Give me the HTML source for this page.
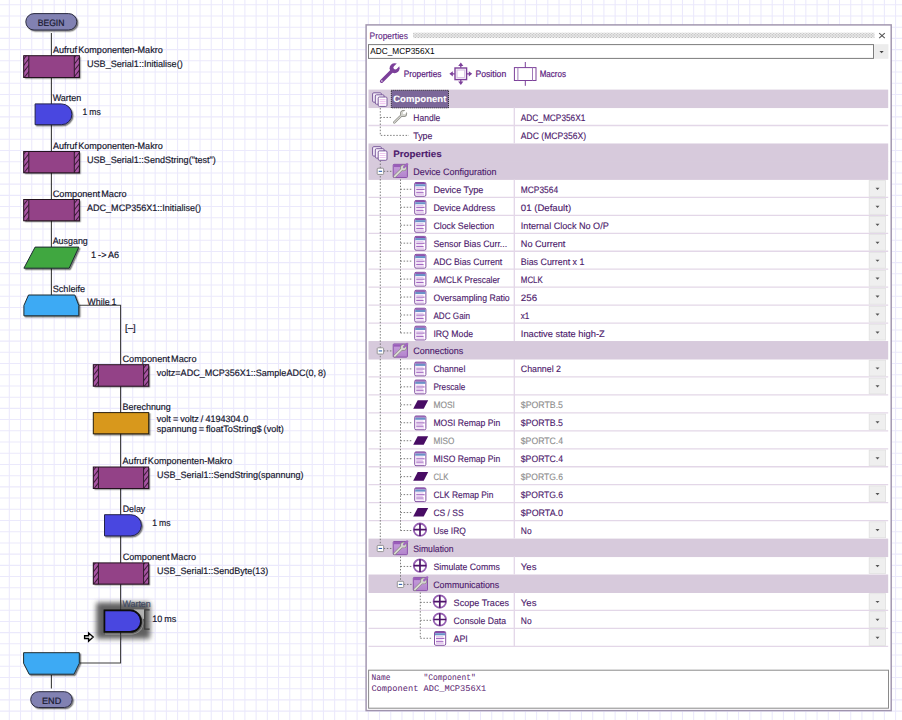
<!DOCTYPE html>
<html><head><meta charset="utf-8"><title>Flowcode</title>
<style>html,body{margin:0;padding:0;background:#fff}body{width:902px;height:720px;overflow:hidden;position:relative}svg{position:absolute;left:0;top:0;display:block}text{font-family:"Liberation Sans",sans-serif;white-space:pre;text-rendering:geometricPrecision}</style></head><body>
<svg width="902" height="720" viewBox="0 0 902 720" font-family='"Liberation Sans", sans-serif'>
<defs>
<filter id="sh" x="-20%" y="-20%" width="150%" height="160%"><feDropShadow dx="1.3" dy="1.3" stdDeviation="0.45" flood-color="#000" flood-opacity="0.5"/></filter>
<filter id="glow" x="-40%" y="-40%" width="180%" height="180%"><feGaussianBlur stdDeviation="2.7"/></filter>
<pattern id="hatch" width="3.9" height="3.9" patternUnits="userSpaceOnUse" patternTransform="rotate(-52)"><rect width="3.9" height="3.9" fill="#a755a2"/><rect width="3.9" height="0.95" fill="#3a1836"/></pattern>
<pattern id="grip" width="3" height="5.4" patternUnits="userSpaceOnUse" x="413" y="32.7"><rect width="3" height="5.4" fill="#f6f6f6"/><g fill="#a2a2a2"><rect x="0.2" y="0.2" width="1.15" height="1.1"/><rect x="1.7" y="1.55" width="1.15" height="1.1"/><rect x="0.2" y="2.9" width="1.15" height="1.1"/><rect x="1.7" y="4.2" width="1.15" height="1.1"/></g></pattern>
<linearGradient id="fold" x1="0" y1="0" x2="0" y2="1"><stop offset="0" stop-color="#c79fdc"/><stop offset="1" stop-color="#b283cc"/></linearGradient>
</defs>
<rect width="902" height="720" fill="#fff"/>
<g stroke="#ebe9fc" stroke-width="1.05">
<path d="M9.30 0V720M20.52 0V720M31.74 0V720M42.96 0V720M54.18 0V720M65.39 0V720M76.61 0V720M87.83 0V720M99.05 0V720M110.27 0V720M121.49 0V720M132.71 0V720M143.93 0V720M155.15 0V720M166.37 0V720M177.58 0V720M188.80 0V720M200.02 0V720M211.24 0V720M222.46 0V720M233.68 0V720M244.90 0V720M256.12 0V720M267.34 0V720M278.56 0V720M289.77 0V720M300.99 0V720M312.21 0V720M323.43 0V720M334.65 0V720M345.87 0V720M357.09 0V720M368.31 0V720M379.53 0V720M390.75 0V720M401.96 0V720M413.18 0V720M424.40 0V720M435.62 0V720M446.84 0V720M458.06 0V720M469.28 0V720M480.50 0V720M491.72 0V720M502.94 0V720M514.15 0V720M525.37 0V720M536.59 0V720M547.81 0V720M559.03 0V720M570.25 0V720M581.47 0V720M592.69 0V720M603.91 0V720M615.13 0V720M626.35 0V720M637.56 0V720M648.78 0V720M660.00 0V720M671.22 0V720M682.44 0V720M693.66 0V720M704.88 0V720M716.10 0V720M727.32 0V720M738.54 0V720M749.75 0V720M760.97 0V720M772.19 0V720M783.41 0V720M794.63 0V720M805.85 0V720M817.07 0V720M828.29 0V720M839.51 0V720M850.73 0V720M861.94 0V720M873.16 0V720M884.38 0V720M895.60 0V720M0 4.75H902M0 15.96H902M0 27.17H902M0 38.39H902M0 49.60H902M0 60.81H902M0 72.02H902M0 83.23H902M0 94.45H902M0 105.66H902M0 116.87H902M0 128.08H902M0 139.29H902M0 150.51H902M0 161.72H902M0 172.93H902M0 184.14H902M0 195.35H902M0 206.57H902M0 217.78H902M0 228.99H902M0 240.20H902M0 251.41H902M0 262.63H902M0 273.84H902M0 285.05H902M0 296.26H902M0 307.47H902M0 318.69H902M0 329.90H902M0 341.11H902M0 352.32H902M0 363.53H902M0 374.75H902M0 385.96H902M0 397.17H902M0 408.38H902M0 419.59H902M0 430.81H902M0 442.02H902M0 453.23H902M0 464.44H902M0 475.65H902M0 486.87H902M0 498.08H902M0 509.29H902M0 520.50H902M0 531.71H902M0 542.93H902M0 554.14H902M0 565.35H902M0 576.56H902M0 587.77H902M0 598.99H902M0 610.20H902M0 621.41H902M0 632.62H902M0 643.83H902M0 655.05H902M0 666.26H902M0 677.47H902M0 688.68H902M0 699.89H902M0 711.11H902" fill="none"/>
</g>
<g stroke="#3c3c3c" stroke-width="1.1" fill="none">
<path d="M51.4 33V296"/>
<path d="M79.3 305.2H120.6V663H79.8"/>
<path d="M51.4 675V688.6"/>
</g>
<g filter="url(#sh)"><rect x="25.80" y="13.60" width="51.00" height="16.40" rx="8.20" fill="#8181b2" stroke="#2c2c40" stroke-width="1.0"/></g>
<text x="37.70" y="25.80" font-size="9.2" fill="#16162e" stroke="#16162e" stroke-width="0.18" word-spacing="-0.5" textLength="26.70" lengthAdjust="spacingAndGlyphs" >BEGIN</text>
<g filter="url(#sh)"><rect x="23.70" y="55.70" width="55.70" height="21.80" fill="#934387"/></g>
<rect x="23.70" y="55.70" width="5.1" height="21.80" fill="url(#hatch)"/>
<rect x="74.30" y="55.70" width="5.1" height="21.80" fill="url(#hatch)"/>
<path d="M28.80 55.70V77.50M74.30 55.70V77.50" stroke="#2a1626" stroke-width="0.95" fill="none"/>
<rect x="23.70" y="55.70" width="55.70" height="21.80" fill="none" stroke="#24121f" stroke-width="1.0"/>
<text x="53.00" y="52.85" font-size="9.3" fill="#16162e" stroke="#16162e" stroke-width="0.18" word-spacing="-1.4" textLength="109.70" lengthAdjust="spacingAndGlyphs" >Aufruf Komponenten-Makro</text>
<text x="87.00" y="66.85" font-size="9.3" fill="#16162e" stroke="#16162e" stroke-width="0.18" word-spacing="-0.5" textLength="95.70" lengthAdjust="spacingAndGlyphs" >USB_Serial1::Initialise()</text>
<g filter="url(#sh)"><path d="M35.10 103.90H61.50A10.40 10.40 0 0 1 61.50 124.70H35.10Z" fill="#4a46e0" stroke="#22224a" stroke-width="1.0"/></g>
<text x="52.70" y="101.05" font-size="9.3" fill="#16162e" stroke="#16162e" stroke-width="0.18" word-spacing="-0.5" textLength="28.60" lengthAdjust="spacingAndGlyphs" >Warten</text>
<text x="82.50" y="114.85" font-size="9.3" fill="#16162e" stroke="#16162e" stroke-width="0.18" word-spacing="-0.5" textLength="18.20" lengthAdjust="spacingAndGlyphs" >1 ms</text>
<g filter="url(#sh)"><rect x="23.70" y="151.50" width="55.70" height="21.30" fill="#934387"/></g>
<rect x="23.70" y="151.50" width="5.1" height="21.30" fill="url(#hatch)"/>
<rect x="74.30" y="151.50" width="5.1" height="21.30" fill="url(#hatch)"/>
<path d="M28.80 151.50V172.80M74.30 151.50V172.80" stroke="#2a1626" stroke-width="0.95" fill="none"/>
<rect x="23.70" y="151.50" width="55.70" height="21.30" fill="none" stroke="#24121f" stroke-width="1.0"/>
<text x="53.00" y="148.65" font-size="9.3" fill="#16162e" stroke="#16162e" stroke-width="0.18" word-spacing="-1.4" textLength="109.70" lengthAdjust="spacingAndGlyphs" >Aufruf Komponenten-Makro</text>
<text x="87.00" y="162.65" font-size="9.3" fill="#16162e" stroke="#16162e" stroke-width="0.18" word-spacing="-0.5" textLength="128.70" lengthAdjust="spacingAndGlyphs" >USB_Serial1::SendString("test")</text>
<g filter="url(#sh)"><rect x="23.70" y="199.50" width="55.70" height="21.30" fill="#934387"/></g>
<rect x="23.70" y="199.50" width="5.1" height="21.30" fill="url(#hatch)"/>
<rect x="74.30" y="199.50" width="5.1" height="21.30" fill="url(#hatch)"/>
<path d="M28.80 199.50V220.80M74.30 199.50V220.80" stroke="#2a1626" stroke-width="0.95" fill="none"/>
<rect x="23.70" y="199.50" width="55.70" height="21.30" fill="none" stroke="#24121f" stroke-width="1.0"/>
<text x="52.70" y="196.65" font-size="9.3" fill="#16162e" stroke="#16162e" stroke-width="0.18" word-spacing="-1.4" textLength="74.00" lengthAdjust="spacingAndGlyphs" >Component Macro</text>
<text x="87.00" y="210.65" font-size="9.3" fill="#16162e" stroke="#16162e" stroke-width="0.18" word-spacing="-0.5" textLength="114.00" lengthAdjust="spacingAndGlyphs" >ADC_MCP356X1::Initialise()</text>
<g filter="url(#sh)"><polygon points="35.10,247.10 78.80,247.10 69.20,268.20 23.90,268.20" fill="#41a741" stroke="#1c2a30" stroke-width="1.0"/></g>
<text x="52.70" y="244.15" font-size="9.3" fill="#16162e" stroke="#16162e" stroke-width="0.18" word-spacing="-0.5" textLength="35.10" lengthAdjust="spacingAndGlyphs" >Ausgang</text>
<text x="91.00" y="258.05" font-size="9.3" fill="#16162e" stroke="#16162e" stroke-width="0.18" word-spacing="-0.5" textLength="28.20" lengthAdjust="spacingAndGlyphs" >1 -&gt; A6</text>
<g filter="url(#sh)"><polygon points="28.50,295.00 74.80,295.00 78.80,305.50 78.80,315.80 23.90,315.80 23.90,305.50" fill="#3eaaf4" stroke="#1c2a30" stroke-width="1.0"/></g>
<text x="52.70" y="292.05" font-size="9.3" fill="#16162e" stroke="#16162e" stroke-width="0.18" word-spacing="-0.5" textLength="32.50" lengthAdjust="spacingAndGlyphs" >Schleife</text>
<text x="87.30" y="305.05" font-size="9.3" fill="#16162e" stroke="#16162e" stroke-width="0.18" word-spacing="-0.5" textLength="29.30" lengthAdjust="spacingAndGlyphs" >While 1</text>
<text x="125.00" y="331.05" font-size="9.3" fill="#16162e" stroke="#16162e" stroke-width="0.18" word-spacing="-0.5" textLength="10.70" lengthAdjust="spacingAndGlyphs" >[–]</text>
<g filter="url(#sh)"><rect x="93.30" y="364.70" width="55.40" height="21.50" fill="#934387"/></g>
<rect x="93.30" y="364.70" width="5.1" height="21.50" fill="url(#hatch)"/>
<rect x="143.60" y="364.70" width="5.1" height="21.50" fill="url(#hatch)"/>
<path d="M98.40 364.70V386.20M143.60 364.70V386.20" stroke="#2a1626" stroke-width="0.95" fill="none"/>
<rect x="93.30" y="364.70" width="55.40" height="21.50" fill="none" stroke="#24121f" stroke-width="1.0"/>
<text x="122.50" y="361.85" font-size="9.3" fill="#16162e" stroke="#16162e" stroke-width="0.18" word-spacing="-1.4" textLength="74.00" lengthAdjust="spacingAndGlyphs" >Component Macro</text>
<text x="156.80" y="375.75" font-size="9.3" fill="#16162e" stroke="#16162e" stroke-width="0.18" word-spacing="-0.5" textLength="169.20" lengthAdjust="spacingAndGlyphs" >voltz=ADC_MCP356X1::SampleADC(0, 8)</text>
<g filter="url(#sh)"><rect x="93.3" y="412.6" width="55.4" height="21.2" fill="#d8981b" stroke="#2a2010" stroke-width="1.0"/></g>
<text x="122.50" y="409.75" font-size="9.3" fill="#16162e" stroke="#16162e" stroke-width="0.18" word-spacing="-0.5" textLength="48.30" lengthAdjust="spacingAndGlyphs" >Berechnung</text>
<text x="156.80" y="421.75" font-size="9.3" fill="#16162e" stroke="#16162e" stroke-width="0.18" word-spacing="-0.5" textLength="91.40" lengthAdjust="spacingAndGlyphs" >volt = voltz / 4194304.0</text>
<text x="156.80" y="432.35" font-size="9.3" fill="#16162e" stroke="#16162e" stroke-width="0.18" word-spacing="-0.5" textLength="127.00" lengthAdjust="spacingAndGlyphs" >spannung = floatToString$ (volt)</text>
<g filter="url(#sh)"><rect x="93.30" y="467.00" width="55.40" height="21.50" fill="#934387"/></g>
<rect x="93.30" y="467.00" width="5.1" height="21.50" fill="url(#hatch)"/>
<rect x="143.60" y="467.00" width="5.1" height="21.50" fill="url(#hatch)"/>
<path d="M98.40 467.00V488.50M143.60 467.00V488.50" stroke="#2a1626" stroke-width="0.95" fill="none"/>
<rect x="93.30" y="467.00" width="55.40" height="21.50" fill="none" stroke="#24121f" stroke-width="1.0"/>
<text x="122.60" y="464.15" font-size="9.3" fill="#16162e" stroke="#16162e" stroke-width="0.18" word-spacing="-1.4" textLength="109.70" lengthAdjust="spacingAndGlyphs" >Aufruf Komponenten-Makro</text>
<text x="157.00" y="478.05" font-size="9.3" fill="#16162e" stroke="#16162e" stroke-width="0.18" word-spacing="-0.5" textLength="146.40" lengthAdjust="spacingAndGlyphs" >USB_Serial1::SendString(spannung)</text>
<g filter="url(#sh)"><path d="M104.50 514.70H130.80A10.60 10.60 0 0 1 130.80 535.90H104.50Z" fill="#4a46e0" stroke="#22224a" stroke-width="1.0"/></g>
<text x="122.70" y="512.05" font-size="9.3" fill="#16162e" stroke="#16162e" stroke-width="0.18" word-spacing="-0.5" textLength="22.50" lengthAdjust="spacingAndGlyphs" >Delay</text>
<text x="152.30" y="525.75" font-size="9.3" fill="#16162e" stroke="#16162e" stroke-width="0.18" word-spacing="-0.5" textLength="18.30" lengthAdjust="spacingAndGlyphs" >1 ms</text>
<g filter="url(#sh)"><rect x="93.30" y="562.90" width="55.40" height="21.20" fill="#934387"/></g>
<rect x="93.30" y="562.90" width="5.1" height="21.20" fill="url(#hatch)"/>
<rect x="143.60" y="562.90" width="5.1" height="21.20" fill="url(#hatch)"/>
<path d="M98.40 562.90V584.10M143.60 562.90V584.10" stroke="#2a1626" stroke-width="0.95" fill="none"/>
<rect x="93.30" y="562.90" width="55.40" height="21.20" fill="none" stroke="#24121f" stroke-width="1.0"/>
<text x="122.70" y="559.95" font-size="9.3" fill="#16162e" stroke="#16162e" stroke-width="0.18" word-spacing="-1.4" textLength="73.30" lengthAdjust="spacingAndGlyphs" >Component Macro</text>
<text x="157.00" y="573.85" font-size="9.3" fill="#16162e" stroke="#16162e" stroke-width="0.18" word-spacing="-0.5" textLength="111.20" lengthAdjust="spacingAndGlyphs" >USB_Serial1::SendByte(13)</text>
<rect x="96.2" y="602.6" width="54.0" height="36.2" rx="2" fill="#606060" filter="url(#glow)"/>
<rect x="134" y="609.4" width="10.4" height="9.5" fill="#b2b2b2"/>
<path d="M105.2 611.2H131.8A11.6 11.6 0 0 1 131.8 634.4H105.2Z" fill="#c2c2c2"/>
<path d="M120.6 600V640" stroke="#3c3c3c" stroke-width="1.1"/>
<path d="M149.6 609.9H144.7V629H149.6" fill="none" stroke="#3c3c3c" stroke-width="1.25"/>
<g filter="url(#sh)"><path d="M104.45 610.45H130.20A10.75 10.75 0 0 1 130.20 631.95H104.45Z" fill="#4a46e0" stroke="#0a0a0a" stroke-width="1.7"/></g>
<text x="122.40" y="607.00" font-size="9.3" fill="#3e4862" stroke="#3e4862" stroke-width="0.15" textLength="28.40" lengthAdjust="spacingAndGlyphs" >Warten</text>
<text x="152.20" y="621.65" font-size="9.3" fill="#16162e" stroke="#16162e" stroke-width="0.18" word-spacing="-0.5" textLength="24.00" lengthAdjust="spacingAndGlyphs" >10 ms</text>
<path d="M84.6 635.7H88.6V633.0L93.2 637.1L88.6 641.2V638.5H84.6Z" fill="#fff" stroke="#000" stroke-width="1.35"/>
<g filter="url(#sh)"><polygon points="23.60,652.70 79.30,652.70 79.30,663.30 74.00,674.20 29.20,674.20 23.60,663.30" fill="#3eaaf4" stroke="#1c2a30" stroke-width="1.0"/></g>
<g filter="url(#sh)"><rect x="30.70" y="691.70" width="41.50" height="15.80" rx="7.90" fill="#8181b2" stroke="#2c2c40" stroke-width="1.0"/></g>
<text x="42.00" y="703.60" font-size="9.2" fill="#16162e" stroke="#16162e" stroke-width="0.18" word-spacing="-0.5" textLength="19.20" lengthAdjust="spacingAndGlyphs" >END</text>
<rect x="366.1" y="24.9" width="525.1" height="685.7" fill="#fff" stroke="#a094ae" stroke-width="1.45"/>
<text x="369.60" y="39.05" font-size="9.3" fill="#632a86" stroke="#632a86" stroke-width="0.13" textLength="38.30" lengthAdjust="spacingAndGlyphs" >Properties</text>
<rect x="413" y="32.7" width="461.5" height="5.4" fill="url(#grip)"/>
<path d="M879.2 33.2L884.8 38.2M884.8 33.2L879.2 38.2" stroke="#555" stroke-width="1.1"/>
<rect x="368.5" y="44.6" width="505" height="13.8" fill="#fff" stroke="#7c7c7c" stroke-width="1"/>
<rect x="874.2" y="44.2" width="14.2" height="14.6" fill="#ececec"/>
<path d="M879.5 50.9H883.7L881.6 53.3Z" fill="#444"/>
<text x="370.30" y="53.70" font-size="8.7" fill="#000" textLength="64.30" lengthAdjust="spacingAndGlyphs" >ADC_MCP356X1</text>
<g>
<path d="M381.6 81.2L392.6 70.2" stroke="#7c409a" stroke-width="3.4" stroke-linecap="round"/>
<circle cx="394.6" cy="68.3" r="5.0" fill="#7c409a"/>
<path d="M395.3 67.6L401.5 61.4" stroke="#fff" stroke-width="3.7"/>
<circle cx="395.3" cy="67.6" r="1.85" fill="#fff"/>
<circle cx="381.9" cy="80.9" r="0.75" fill="#fff"/>
</g>
<text x="403.70" y="77.00" font-size="9.3" fill="#5c2280" stroke="#5c2280" stroke-width="0.2" textLength="37.70" lengthAdjust="spacingAndGlyphs" >Properties</text>
<g stroke="#7c409a" fill="none">
<rect x="455.00" y="68.00" width="11.6" height="11.6" stroke-width="1.4"/>
<rect x="457.00" y="70.00" width="7.6" height="7.6" stroke="#d9c4e4" stroke-width="1.2"/>
<path d="M460.8 67.8V64.3M460.8 79.8V83.3M454.8 73.8H451.3M466.8 73.8H470.3" stroke-width="1.3"/>
</g>
<g fill="#7c409a">
<path d="M460.8 62.599999999999994L463.40000000000003 66.0H458.2Z"/>
<path d="M460.8 85.0L463.40000000000003 81.6H458.2Z"/>
<path d="M449.40000000000003 73.8L452.8 71.2V76.39999999999999Z"/>
<path d="M472.2 73.8L468.8 71.2V76.39999999999999Z"/>
</g>
<text x="475.50" y="77.00" font-size="9.3" fill="#5c2280" stroke="#5c2280" stroke-width="0.2" textLength="30.70" lengthAdjust="spacingAndGlyphs" >Position</text>
<g stroke="#7c409a" fill="none" stroke-width="1.0">
<rect x="514.4" y="67.6" width="21.6" height="12.9" fill="#fff"/>
<path d="M525.3 62V67.6M525.3 80.5V85.8"/>
<path d="M517.9 67.6V80.5M532.5 67.6V80.5" stroke="#a07ab8"/>
</g>
<text x="539.70" y="77.00" font-size="9.3" fill="#5c2280" stroke="#5c2280" stroke-width="0.2" textLength="26.30" lengthAdjust="spacingAndGlyphs" >Macros</text>
<rect x="368.5" y="89.60" width="519.70" height="18.46" fill="#d7cadc"/>
<rect x="368.5" y="143.48" width="519.70" height="18.46" fill="#d7cadc"/>
<rect x="368.5" y="161.44" width="519.70" height="18.46" fill="#d7cadc"/>
<rect x="368.5" y="341.04" width="519.70" height="18.46" fill="#d7cadc"/>
<rect x="368.5" y="538.60" width="519.70" height="18.46" fill="#d7cadc"/>
<rect x="368.5" y="574.52" width="519.70" height="18.46" fill="#d7cadc"/>
<path d="M368.5 125.52H888.2M514.3 107.56V125.52M514.3 125.52V143.48M368.5 197.36H888.2M514.3 179.40V197.36M368.5 215.32H888.2M514.3 197.36V215.32M368.5 233.28H888.2M514.3 215.32V233.28M368.5 251.24H888.2M514.3 233.28V251.24M368.5 269.20H888.2M514.3 251.24V269.20M368.5 287.16H888.2M514.3 269.20V287.16M368.5 305.12H888.2M514.3 287.16V305.12M368.5 323.08H888.2M514.3 305.12V323.08M514.3 323.08V341.04M368.5 376.96H888.2M514.3 359.00V376.96M368.5 394.92H888.2M514.3 376.96V394.92M368.5 412.88H888.2M514.3 394.92V412.88M368.5 430.84H888.2M514.3 412.88V430.84M368.5 448.80H888.2M514.3 430.84V448.80M368.5 466.76H888.2M514.3 448.80V466.76M368.5 484.72H888.2M514.3 466.76V484.72M368.5 502.68H888.2M514.3 484.72V502.68M368.5 520.64H888.2M514.3 502.68V520.64M514.3 520.64V538.60M514.3 556.56V574.52M368.5 610.44H888.2M514.3 592.48V610.44M368.5 628.40H888.2M514.3 610.44V628.40M368.5 646.36H888.2M514.3 628.40V646.36" stroke="#e3d7e8" stroke-width="1.3" fill="none"/>
<path d="M380.3 108V135.40H409M380.3 117.44H391" fill="none" stroke="#686868" stroke-width="0.85" stroke-dasharray="1.5 1.6"/>
<path d="M380.3 160.48V548.48" fill="none" stroke="#686868" stroke-width="0.85" stroke-dasharray="1.5 1.6"/>
<path d="M383.7 171.32H391.5" fill="none" stroke="#686868" stroke-width="0.85" stroke-dasharray="1.5 1.6"/>
<path d="M383.7 350.92H391.5" fill="none" stroke="#686868" stroke-width="0.85" stroke-dasharray="1.5 1.6"/>
<path d="M383.7 548.48H391.5" fill="none" stroke="#686868" stroke-width="0.85" stroke-dasharray="1.5 1.6"/>
<path d="M400.5 179.40V332.96" fill="none" stroke="#686868" stroke-width="0.85" stroke-dasharray="1.5 1.6"/>
<path d="M400.5 189.28H412.5" fill="none" stroke="#686868" stroke-width="0.85" stroke-dasharray="1.5 1.6"/>
<path d="M400.5 207.24H412.5" fill="none" stroke="#686868" stroke-width="0.85" stroke-dasharray="1.5 1.6"/>
<path d="M400.5 225.20H412.5" fill="none" stroke="#686868" stroke-width="0.85" stroke-dasharray="1.5 1.6"/>
<path d="M400.5 243.16H412.5" fill="none" stroke="#686868" stroke-width="0.85" stroke-dasharray="1.5 1.6"/>
<path d="M400.5 261.12H412.5" fill="none" stroke="#686868" stroke-width="0.85" stroke-dasharray="1.5 1.6"/>
<path d="M400.5 279.08H412.5" fill="none" stroke="#686868" stroke-width="0.85" stroke-dasharray="1.5 1.6"/>
<path d="M400.5 297.04H412.5" fill="none" stroke="#686868" stroke-width="0.85" stroke-dasharray="1.5 1.6"/>
<path d="M400.5 315.00H412.5" fill="none" stroke="#686868" stroke-width="0.85" stroke-dasharray="1.5 1.6"/>
<path d="M400.5 332.96H412.5" fill="none" stroke="#686868" stroke-width="0.85" stroke-dasharray="1.5 1.6"/>
<path d="M400.5 359.00V530.52" fill="none" stroke="#686868" stroke-width="0.85" stroke-dasharray="1.5 1.6"/>
<path d="M400.5 368.88H412.5" fill="none" stroke="#686868" stroke-width="0.85" stroke-dasharray="1.5 1.6"/>
<path d="M400.5 386.84H412.5" fill="none" stroke="#686868" stroke-width="0.85" stroke-dasharray="1.5 1.6"/>
<path d="M400.5 404.80H412.5" fill="none" stroke="#686868" stroke-width="0.85" stroke-dasharray="1.5 1.6"/>
<path d="M400.5 422.76H412.5" fill="none" stroke="#686868" stroke-width="0.85" stroke-dasharray="1.5 1.6"/>
<path d="M400.5 440.72H412.5" fill="none" stroke="#686868" stroke-width="0.85" stroke-dasharray="1.5 1.6"/>
<path d="M400.5 458.68H412.5" fill="none" stroke="#686868" stroke-width="0.85" stroke-dasharray="1.5 1.6"/>
<path d="M400.5 476.64H412.5" fill="none" stroke="#686868" stroke-width="0.85" stroke-dasharray="1.5 1.6"/>
<path d="M400.5 494.60H412.5" fill="none" stroke="#686868" stroke-width="0.85" stroke-dasharray="1.5 1.6"/>
<path d="M400.5 512.56H412.5" fill="none" stroke="#686868" stroke-width="0.85" stroke-dasharray="1.5 1.6"/>
<path d="M400.5 530.52H412.5" fill="none" stroke="#686868" stroke-width="0.85" stroke-dasharray="1.5 1.6"/>
<path d="M400.5 556.56V584.40" fill="none" stroke="#686868" stroke-width="0.85" stroke-dasharray="1.5 1.6"/>
<path d="M400.5 566.44H412.5M403.9 584.40H412" fill="none" stroke="#686868" stroke-width="0.85" stroke-dasharray="1.5 1.6"/>
<path d="M420.3 592.48V638.28" fill="none" stroke="#686868" stroke-width="0.85" stroke-dasharray="1.5 1.6"/>
<path d="M420.3 602.36H432.5" fill="none" stroke="#686868" stroke-width="0.85" stroke-dasharray="1.5 1.6"/>
<path d="M420.3 620.32H432.5" fill="none" stroke="#686868" stroke-width="0.85" stroke-dasharray="1.5 1.6"/>
<path d="M420.3 638.28H432.5" fill="none" stroke="#686868" stroke-width="0.85" stroke-dasharray="1.5 1.6"/>
<g transform="translate(372.20,92.40)" stroke="#7b5a9c" stroke-width="1" fill="#f6effa">
<rect x="0.4" y="0.4" width="8.8" height="9.4" rx="1.2"/>
<rect x="3.1" y="2.4" width="8.8" height="9.4" rx="1.2"/>
<rect x="6.0" y="4.6" width="8.8" height="9.4" rx="1.2" fill="#fff"/>
<path d="M7.4 7.2H13.4M7.4 9.2H13.4M7.4 11.2H13.4" stroke="#f0c8f0" stroke-width="1.2"/>
</g>
<rect x="391.3" y="90.30" width="57.2" height="17.6" fill="#7b6799" stroke="#1a1a1a" stroke-width="0.9" stroke-dasharray="1 1"/>
<text x="393.20" y="102.35" font-size="9.3" fill="#fff" font-weight="bold" stroke="#fff" stroke-width="0.1" textLength="53.20" lengthAdjust="spacingAndGlyphs" >Component</text>
<g transform="translate(392.90,109.96)">
<path d="M1.4 12.4L9.6 4.4" stroke="#85857f" stroke-width="2.4" stroke-linecap="round"/>
<circle cx="10.7" cy="3.6" r="3.5" fill="#85857f"/>
<path d="M1.4 12.4L9.6 4.4" stroke="#dadad4" stroke-width="1.2" stroke-linecap="round"/>
<circle cx="10.7" cy="3.6" r="2.7" fill="#d2d2cc"/>
<path d="M11.2 3.1L15.4 -1.1" stroke="#fff" stroke-width="2.5"/>
<circle cx="11.2" cy="3.1" r="1.25" fill="#fff"/>
</g>
<text x="413.30" y="121.01" font-size="9.3" fill="#4d1a6c" stroke="#4d1a6c" stroke-width="0.13" textLength="27.00" lengthAdjust="spacingAndGlyphs" >Handle</text>
<text x="520.80" y="121.01" font-size="9.3" fill="#4d1a6c" stroke="#4d1a6c" stroke-width="0.13" textLength="64.60" lengthAdjust="spacingAndGlyphs" >ADC_MCP356X1</text>
<text x="413.30" y="138.97" font-size="9.3" fill="#4d1a6c" stroke="#4d1a6c" stroke-width="0.13" textLength="19.10" lengthAdjust="spacingAndGlyphs" >Type</text>
<text x="520.80" y="138.97" font-size="9.3" fill="#4d1a6c" stroke="#4d1a6c" stroke-width="0.13" textLength="65.30" lengthAdjust="spacingAndGlyphs" >ADC (MCP356X)</text>
<g transform="translate(372.20,146.28)" stroke="#7b5a9c" stroke-width="1" fill="#f6effa">
<rect x="0.4" y="0.4" width="8.8" height="9.4" rx="1.2"/>
<rect x="3.1" y="2.4" width="8.8" height="9.4" rx="1.2"/>
<rect x="6.0" y="4.6" width="8.8" height="9.4" rx="1.2" fill="#fff"/>
<path d="M7.4 7.2H13.4M7.4 9.2H13.4M7.4 11.2H13.4" stroke="#f0c8f0" stroke-width="1.2"/>
</g>
<text x="393.20" y="157.03" font-size="9.3" fill="#4d1a6c" font-weight="bold" stroke="#4d1a6c" stroke-width="0.1" textLength="48.50" lengthAdjust="spacingAndGlyphs" >Properties</text>
<rect x="377.20" y="168.22" width="6.4" height="6.2" rx="0.8" fill="#fff" stroke="#8c8c8c" stroke-width="0.9"/>
<path d="M378.70 171.32H382.10" stroke="#2f5fb0" stroke-width="1.1"/>
<g transform="translate(392.80,163.94)">
<rect x="0.4" y="0.4" width="14.2" height="13.2" rx="0.8" fill="url(#fold)" stroke="#8448a6" stroke-width="0.9"/>
<rect x="0.9" y="0.9" width="13.2" height="2.2" fill="#9a5cba"/>
<path d="M2.0 12.4L9.6 4.8" stroke="#8c8c86" stroke-width="2.9" stroke-linecap="round"/>
<circle cx="10.7" cy="3.9" r="3.3" fill="#8c8c86"/>
<path d="M2.0 12.4L9.6 4.8" stroke="#dcdcd6" stroke-width="1.7" stroke-linecap="round"/>
<circle cx="10.7" cy="3.9" r="2.6" fill="#d4d4ce"/>
<path d="M11.2 3.4L15 -0.4" stroke="#a266c0" stroke-width="2.1"/>
<circle cx="11.2" cy="3.4" r="1.05" fill="#a266c0"/>
</g>
<text x="413.20" y="174.89" font-size="9.3" fill="#4d1a6c" stroke="#4d1a6c" stroke-width="0.13" textLength="83.30" lengthAdjust="spacingAndGlyphs" >Device Configuration</text>
<g transform="translate(414.20,182.00)">
<rect x="0.5" y="0.5" width="11.2" height="13.8" rx="1.3" fill="#fff" stroke="#8350a2" stroke-width="1"/>
<rect x="1" y="0.8" width="10.2" height="1.3" fill="#8a4aaa"/>
<rect x="1" y="2.2" width="10.2" height="2.1" fill="#6a92c8"/>
<path d="M2 5.6H9.2" stroke="#e6c8f0" stroke-width="1.1"/>
<path d="M2 7.4H10.4" stroke="#a368c2" stroke-width="1.15"/>
<path d="M2 9.1H8.6" stroke="#e6c8f0" stroke-width="1.1"/>
<path d="M2 10.7H9.4" stroke="#a368c2" stroke-width="1.15"/>
<path d="M2 12.4H9.8" stroke="#e6c8f0" stroke-width="1.1"/>
</g>
<text x="433.40" y="192.85" font-size="9.3" fill="#4d1a6c" stroke="#4d1a6c" stroke-width="0.13" textLength="50.00" lengthAdjust="spacingAndGlyphs" >Device Type</text>
<text x="520.80" y="192.85" font-size="9.3" fill="#4d1a6c" stroke="#4d1a6c" stroke-width="0.13" textLength="37.30" lengthAdjust="spacingAndGlyphs" >MCP3564</text>
<rect x="869.2" y="180.60" width="16.4" height="15.8" fill="#efefef" stroke="#e0e0e0" stroke-width="0.8"/>
<path d="M875.5 187.80H879.5L877.5 190.00Z" fill="#555"/>
<g transform="translate(414.20,199.96)">
<rect x="0.5" y="0.5" width="11.2" height="13.8" rx="1.3" fill="#fff" stroke="#8350a2" stroke-width="1"/>
<rect x="1" y="0.8" width="10.2" height="1.3" fill="#8a4aaa"/>
<rect x="1" y="2.2" width="10.2" height="2.1" fill="#6a92c8"/>
<path d="M2 5.6H9.2" stroke="#e6c8f0" stroke-width="1.1"/>
<path d="M2 7.4H10.4" stroke="#a368c2" stroke-width="1.15"/>
<path d="M2 9.1H8.6" stroke="#e6c8f0" stroke-width="1.1"/>
<path d="M2 10.7H9.4" stroke="#a368c2" stroke-width="1.15"/>
<path d="M2 12.4H9.8" stroke="#e6c8f0" stroke-width="1.1"/>
</g>
<text x="433.40" y="210.81" font-size="9.3" fill="#4d1a6c" stroke="#4d1a6c" stroke-width="0.13" textLength="61.90" lengthAdjust="spacingAndGlyphs" >Device Address</text>
<text x="520.80" y="210.81" font-size="9.3" fill="#4d1a6c" stroke="#4d1a6c" stroke-width="0.13" textLength="50.30" lengthAdjust="spacingAndGlyphs" >01 (Default)</text>
<rect x="869.2" y="198.56" width="16.4" height="15.8" fill="#efefef" stroke="#e0e0e0" stroke-width="0.8"/>
<path d="M875.5 205.76H879.5L877.5 207.96Z" fill="#555"/>
<g transform="translate(414.20,217.92)">
<rect x="0.5" y="0.5" width="11.2" height="13.8" rx="1.3" fill="#fff" stroke="#8350a2" stroke-width="1"/>
<rect x="1" y="0.8" width="10.2" height="1.3" fill="#8a4aaa"/>
<rect x="1" y="2.2" width="10.2" height="2.1" fill="#6a92c8"/>
<path d="M2 5.6H9.2" stroke="#e6c8f0" stroke-width="1.1"/>
<path d="M2 7.4H10.4" stroke="#a368c2" stroke-width="1.15"/>
<path d="M2 9.1H8.6" stroke="#e6c8f0" stroke-width="1.1"/>
<path d="M2 10.7H9.4" stroke="#a368c2" stroke-width="1.15"/>
<path d="M2 12.4H9.8" stroke="#e6c8f0" stroke-width="1.1"/>
</g>
<text x="433.40" y="228.77" font-size="9.3" fill="#4d1a6c" stroke="#4d1a6c" stroke-width="0.13" textLength="60.70" lengthAdjust="spacingAndGlyphs" >Clock Selection</text>
<text x="520.80" y="228.77" font-size="9.3" fill="#4d1a6c" stroke="#4d1a6c" stroke-width="0.13" textLength="88.00" lengthAdjust="spacingAndGlyphs" >Internal Clock No O/P</text>
<rect x="869.2" y="216.52" width="16.4" height="15.8" fill="#efefef" stroke="#e0e0e0" stroke-width="0.8"/>
<path d="M875.5 223.72H879.5L877.5 225.92Z" fill="#555"/>
<g transform="translate(414.20,235.88)">
<rect x="0.5" y="0.5" width="11.2" height="13.8" rx="1.3" fill="#fff" stroke="#8350a2" stroke-width="1"/>
<rect x="1" y="0.8" width="10.2" height="1.3" fill="#8a4aaa"/>
<rect x="1" y="2.2" width="10.2" height="2.1" fill="#6a92c8"/>
<path d="M2 5.6H9.2" stroke="#e6c8f0" stroke-width="1.1"/>
<path d="M2 7.4H10.4" stroke="#a368c2" stroke-width="1.15"/>
<path d="M2 9.1H8.6" stroke="#e6c8f0" stroke-width="1.1"/>
<path d="M2 10.7H9.4" stroke="#a368c2" stroke-width="1.15"/>
<path d="M2 12.4H9.8" stroke="#e6c8f0" stroke-width="1.1"/>
</g>
<text x="433.40" y="246.73" font-size="9.3" fill="#4d1a6c" stroke="#4d1a6c" stroke-width="0.13" textLength="73.80" lengthAdjust="spacingAndGlyphs" >Sensor Bias Curr...</text>
<text x="520.80" y="246.73" font-size="9.3" fill="#4d1a6c" stroke="#4d1a6c" stroke-width="0.13" textLength="44.60" lengthAdjust="spacingAndGlyphs" >No Current</text>
<rect x="869.2" y="234.48" width="16.4" height="15.8" fill="#efefef" stroke="#e0e0e0" stroke-width="0.8"/>
<path d="M875.5 241.68H879.5L877.5 243.88Z" fill="#555"/>
<g transform="translate(414.20,253.84)">
<rect x="0.5" y="0.5" width="11.2" height="13.8" rx="1.3" fill="#fff" stroke="#8350a2" stroke-width="1"/>
<rect x="1" y="0.8" width="10.2" height="1.3" fill="#8a4aaa"/>
<rect x="1" y="2.2" width="10.2" height="2.1" fill="#6a92c8"/>
<path d="M2 5.6H9.2" stroke="#e6c8f0" stroke-width="1.1"/>
<path d="M2 7.4H10.4" stroke="#a368c2" stroke-width="1.15"/>
<path d="M2 9.1H8.6" stroke="#e6c8f0" stroke-width="1.1"/>
<path d="M2 10.7H9.4" stroke="#a368c2" stroke-width="1.15"/>
<path d="M2 12.4H9.8" stroke="#e6c8f0" stroke-width="1.1"/>
</g>
<text x="433.40" y="264.69" font-size="9.3" fill="#4d1a6c" stroke="#4d1a6c" stroke-width="0.13" textLength="68.80" lengthAdjust="spacingAndGlyphs" >ADC Bias Current</text>
<text x="520.80" y="264.69" font-size="9.3" fill="#4d1a6c" stroke="#4d1a6c" stroke-width="0.13" textLength="63.60" lengthAdjust="spacingAndGlyphs" >Bias Current x 1</text>
<rect x="869.2" y="252.44" width="16.4" height="15.8" fill="#efefef" stroke="#e0e0e0" stroke-width="0.8"/>
<path d="M875.5 259.64H879.5L877.5 261.84Z" fill="#555"/>
<g transform="translate(414.20,271.80)">
<rect x="0.5" y="0.5" width="11.2" height="13.8" rx="1.3" fill="#fff" stroke="#8350a2" stroke-width="1"/>
<rect x="1" y="0.8" width="10.2" height="1.3" fill="#8a4aaa"/>
<rect x="1" y="2.2" width="10.2" height="2.1" fill="#6a92c8"/>
<path d="M2 5.6H9.2" stroke="#e6c8f0" stroke-width="1.1"/>
<path d="M2 7.4H10.4" stroke="#a368c2" stroke-width="1.15"/>
<path d="M2 9.1H8.6" stroke="#e6c8f0" stroke-width="1.1"/>
<path d="M2 10.7H9.4" stroke="#a368c2" stroke-width="1.15"/>
<path d="M2 12.4H9.8" stroke="#e6c8f0" stroke-width="1.1"/>
</g>
<text x="433.40" y="282.65" font-size="9.3" fill="#4d1a6c" stroke="#4d1a6c" stroke-width="0.13" textLength="66.50" lengthAdjust="spacingAndGlyphs" >AMCLK Prescaler</text>
<text x="520.80" y="282.65" font-size="9.3" fill="#4d1a6c" stroke="#4d1a6c" stroke-width="0.13" textLength="22.00" lengthAdjust="spacingAndGlyphs" >MCLK</text>
<rect x="869.2" y="270.40" width="16.4" height="15.8" fill="#efefef" stroke="#e0e0e0" stroke-width="0.8"/>
<path d="M875.5 277.60H879.5L877.5 279.80Z" fill="#555"/>
<g transform="translate(414.20,289.76)">
<rect x="0.5" y="0.5" width="11.2" height="13.8" rx="1.3" fill="#fff" stroke="#8350a2" stroke-width="1"/>
<rect x="1" y="0.8" width="10.2" height="1.3" fill="#8a4aaa"/>
<rect x="1" y="2.2" width="10.2" height="2.1" fill="#6a92c8"/>
<path d="M2 5.6H9.2" stroke="#e6c8f0" stroke-width="1.1"/>
<path d="M2 7.4H10.4" stroke="#a368c2" stroke-width="1.15"/>
<path d="M2 9.1H8.6" stroke="#e6c8f0" stroke-width="1.1"/>
<path d="M2 10.7H9.4" stroke="#a368c2" stroke-width="1.15"/>
<path d="M2 12.4H9.8" stroke="#e6c8f0" stroke-width="1.1"/>
</g>
<text x="433.40" y="300.61" font-size="9.3" fill="#4d1a6c" stroke="#4d1a6c" stroke-width="0.13" textLength="76.30" lengthAdjust="spacingAndGlyphs" >Oversampling Ratio</text>
<text x="520.80" y="300.61" font-size="9.3" fill="#4d1a6c" stroke="#4d1a6c" stroke-width="0.13" textLength="16.30" lengthAdjust="spacingAndGlyphs" >256</text>
<rect x="869.2" y="288.36" width="16.4" height="15.8" fill="#efefef" stroke="#e0e0e0" stroke-width="0.8"/>
<path d="M875.5 295.56H879.5L877.5 297.76Z" fill="#555"/>
<g transform="translate(414.20,307.72)">
<rect x="0.5" y="0.5" width="11.2" height="13.8" rx="1.3" fill="#fff" stroke="#8350a2" stroke-width="1"/>
<rect x="1" y="0.8" width="10.2" height="1.3" fill="#8a4aaa"/>
<rect x="1" y="2.2" width="10.2" height="2.1" fill="#6a92c8"/>
<path d="M2 5.6H9.2" stroke="#e6c8f0" stroke-width="1.1"/>
<path d="M2 7.4H10.4" stroke="#a368c2" stroke-width="1.15"/>
<path d="M2 9.1H8.6" stroke="#e6c8f0" stroke-width="1.1"/>
<path d="M2 10.7H9.4" stroke="#a368c2" stroke-width="1.15"/>
<path d="M2 12.4H9.8" stroke="#e6c8f0" stroke-width="1.1"/>
</g>
<text x="433.40" y="318.57" font-size="9.3" fill="#4d1a6c" stroke="#4d1a6c" stroke-width="0.13" textLength="36.70" lengthAdjust="spacingAndGlyphs" >ADC Gain</text>
<text x="520.80" y="318.57" font-size="9.3" fill="#4d1a6c" stroke="#4d1a6c" stroke-width="0.13" textLength="8.60" lengthAdjust="spacingAndGlyphs" >x1</text>
<rect x="869.2" y="306.32" width="16.4" height="15.8" fill="#efefef" stroke="#e0e0e0" stroke-width="0.8"/>
<path d="M875.5 313.52H879.5L877.5 315.72Z" fill="#555"/>
<g transform="translate(414.20,325.68)">
<rect x="0.5" y="0.5" width="11.2" height="13.8" rx="1.3" fill="#fff" stroke="#8350a2" stroke-width="1"/>
<rect x="1" y="0.8" width="10.2" height="1.3" fill="#8a4aaa"/>
<rect x="1" y="2.2" width="10.2" height="2.1" fill="#6a92c8"/>
<path d="M2 5.6H9.2" stroke="#e6c8f0" stroke-width="1.1"/>
<path d="M2 7.4H10.4" stroke="#a368c2" stroke-width="1.15"/>
<path d="M2 9.1H8.6" stroke="#e6c8f0" stroke-width="1.1"/>
<path d="M2 10.7H9.4" stroke="#a368c2" stroke-width="1.15"/>
<path d="M2 12.4H9.8" stroke="#e6c8f0" stroke-width="1.1"/>
</g>
<text x="433.40" y="336.53" font-size="9.3" fill="#4d1a6c" stroke="#4d1a6c" stroke-width="0.13" textLength="39.70" lengthAdjust="spacingAndGlyphs" >IRQ Mode</text>
<text x="520.80" y="336.53" font-size="9.3" fill="#4d1a6c" stroke="#4d1a6c" stroke-width="0.13" textLength="84.00" lengthAdjust="spacingAndGlyphs" >Inactive state high-Z</text>
<rect x="869.2" y="324.28" width="16.4" height="15.8" fill="#efefef" stroke="#e0e0e0" stroke-width="0.8"/>
<path d="M875.5 331.48H879.5L877.5 333.68Z" fill="#555"/>
<rect x="377.20" y="347.82" width="6.4" height="6.2" rx="0.8" fill="#fff" stroke="#8c8c8c" stroke-width="0.9"/>
<path d="M378.70 350.92H382.10" stroke="#2f5fb0" stroke-width="1.1"/>
<g transform="translate(392.80,343.54)">
<rect x="0.4" y="0.4" width="14.2" height="13.2" rx="0.8" fill="url(#fold)" stroke="#8448a6" stroke-width="0.9"/>
<rect x="0.9" y="0.9" width="13.2" height="2.2" fill="#9a5cba"/>
<path d="M2.0 12.4L9.6 4.8" stroke="#8c8c86" stroke-width="2.9" stroke-linecap="round"/>
<circle cx="10.7" cy="3.9" r="3.3" fill="#8c8c86"/>
<path d="M2.0 12.4L9.6 4.8" stroke="#dcdcd6" stroke-width="1.7" stroke-linecap="round"/>
<circle cx="10.7" cy="3.9" r="2.6" fill="#d4d4ce"/>
<path d="M11.2 3.4L15 -0.4" stroke="#a266c0" stroke-width="2.1"/>
<circle cx="11.2" cy="3.4" r="1.05" fill="#a266c0"/>
</g>
<text x="413.20" y="354.49" font-size="9.3" fill="#4d1a6c" stroke="#4d1a6c" stroke-width="0.13" textLength="50.00" lengthAdjust="spacingAndGlyphs" >Connections</text>
<g transform="translate(414.20,361.60)">
<rect x="0.5" y="0.5" width="11.2" height="13.8" rx="1.3" fill="#fff" stroke="#8350a2" stroke-width="1"/>
<rect x="1" y="0.8" width="10.2" height="1.3" fill="#8a4aaa"/>
<rect x="1" y="2.2" width="10.2" height="2.1" fill="#6a92c8"/>
<path d="M2 5.6H9.2" stroke="#e6c8f0" stroke-width="1.1"/>
<path d="M2 7.4H10.4" stroke="#a368c2" stroke-width="1.15"/>
<path d="M2 9.1H8.6" stroke="#e6c8f0" stroke-width="1.1"/>
<path d="M2 10.7H9.4" stroke="#a368c2" stroke-width="1.15"/>
<path d="M2 12.4H9.8" stroke="#e6c8f0" stroke-width="1.1"/>
</g>
<text x="433.40" y="372.45" font-size="9.3" fill="#4d1a6c" stroke="#4d1a6c" stroke-width="0.13" textLength="31.90" lengthAdjust="spacingAndGlyphs" >Channel</text>
<text x="520.80" y="372.45" font-size="9.3" fill="#4d1a6c" stroke="#4d1a6c" stroke-width="0.13" textLength="40.20" lengthAdjust="spacingAndGlyphs" >Channel 2</text>
<rect x="869.2" y="360.20" width="16.4" height="15.8" fill="#efefef" stroke="#e0e0e0" stroke-width="0.8"/>
<path d="M875.5 367.40H879.5L877.5 369.60Z" fill="#555"/>
<g transform="translate(414.20,379.56)">
<rect x="0.5" y="0.5" width="11.2" height="13.8" rx="1.3" fill="#fff" stroke="#8350a2" stroke-width="1"/>
<rect x="1" y="0.8" width="10.2" height="1.3" fill="#8a4aaa"/>
<rect x="1" y="2.2" width="10.2" height="2.1" fill="#6a92c8"/>
<path d="M2 5.6H9.2" stroke="#e6c8f0" stroke-width="1.1"/>
<path d="M2 7.4H10.4" stroke="#a368c2" stroke-width="1.15"/>
<path d="M2 9.1H8.6" stroke="#e6c8f0" stroke-width="1.1"/>
<path d="M2 10.7H9.4" stroke="#a368c2" stroke-width="1.15"/>
<path d="M2 12.4H9.8" stroke="#e6c8f0" stroke-width="1.1"/>
</g>
<text x="433.40" y="390.41" font-size="9.3" fill="#4d1a6c" stroke="#4d1a6c" stroke-width="0.13" textLength="31.90" lengthAdjust="spacingAndGlyphs" >Prescale</text>
<rect x="869.2" y="378.16" width="16.4" height="15.8" fill="#efefef" stroke="#e0e0e0" stroke-width="0.8"/>
<path d="M875.5 385.36H879.5L877.5 387.56Z" fill="#555"/>
<polygon points="413.20,408.82 417.70,400.22 428.20,400.22 423.70,408.82" fill="#480c64"/>
<text x="433.40" y="408.37" font-size="9.3" fill="#8e8e8e" stroke="#8e8e8e" stroke-width="0.13" textLength="21.50" lengthAdjust="spacingAndGlyphs" >MOSI</text>
<text x="520.80" y="408.37" font-size="9.3" fill="#8e8e8e" stroke="#8e8e8e" stroke-width="0.13" textLength="42.20" lengthAdjust="spacingAndGlyphs" >$PORTB.5</text>
<g transform="translate(414.20,415.48)">
<rect x="0.5" y="0.5" width="11.2" height="13.8" rx="1.3" fill="#fff" stroke="#8350a2" stroke-width="1"/>
<rect x="1" y="0.8" width="10.2" height="1.3" fill="#8a4aaa"/>
<rect x="1" y="2.2" width="10.2" height="2.1" fill="#6a92c8"/>
<path d="M2 5.6H9.2" stroke="#e6c8f0" stroke-width="1.1"/>
<path d="M2 7.4H10.4" stroke="#a368c2" stroke-width="1.15"/>
<path d="M2 9.1H8.6" stroke="#e6c8f0" stroke-width="1.1"/>
<path d="M2 10.7H9.4" stroke="#a368c2" stroke-width="1.15"/>
<path d="M2 12.4H9.8" stroke="#e6c8f0" stroke-width="1.1"/>
</g>
<text x="433.40" y="426.33" font-size="9.3" fill="#4d1a6c" stroke="#4d1a6c" stroke-width="0.13" textLength="66.80" lengthAdjust="spacingAndGlyphs" >MOSI Remap Pin</text>
<text x="520.80" y="426.33" font-size="9.3" fill="#4d1a6c" stroke="#4d1a6c" stroke-width="0.13" textLength="42.20" lengthAdjust="spacingAndGlyphs" >$PORTB.5</text>
<rect x="869.2" y="414.08" width="16.4" height="15.8" fill="#efefef" stroke="#e0e0e0" stroke-width="0.8"/>
<path d="M875.5 421.28H879.5L877.5 423.48Z" fill="#555"/>
<polygon points="413.20,444.74 417.70,436.14 428.20,436.14 423.70,444.74" fill="#480c64"/>
<text x="433.40" y="444.29" font-size="9.3" fill="#8e8e8e" stroke="#8e8e8e" stroke-width="0.13" textLength="20.90" lengthAdjust="spacingAndGlyphs" >MISO</text>
<text x="520.80" y="444.29" font-size="9.3" fill="#8e8e8e" stroke="#8e8e8e" stroke-width="0.13" textLength="42.20" lengthAdjust="spacingAndGlyphs" >$PORTC.4</text>
<g transform="translate(414.20,451.40)">
<rect x="0.5" y="0.5" width="11.2" height="13.8" rx="1.3" fill="#fff" stroke="#8350a2" stroke-width="1"/>
<rect x="1" y="0.8" width="10.2" height="1.3" fill="#8a4aaa"/>
<rect x="1" y="2.2" width="10.2" height="2.1" fill="#6a92c8"/>
<path d="M2 5.6H9.2" stroke="#e6c8f0" stroke-width="1.1"/>
<path d="M2 7.4H10.4" stroke="#a368c2" stroke-width="1.15"/>
<path d="M2 9.1H8.6" stroke="#e6c8f0" stroke-width="1.1"/>
<path d="M2 10.7H9.4" stroke="#a368c2" stroke-width="1.15"/>
<path d="M2 12.4H9.8" stroke="#e6c8f0" stroke-width="1.1"/>
</g>
<text x="433.40" y="462.25" font-size="9.3" fill="#4d1a6c" stroke="#4d1a6c" stroke-width="0.13" textLength="66.80" lengthAdjust="spacingAndGlyphs" >MISO Remap Pin</text>
<text x="520.80" y="462.25" font-size="9.3" fill="#4d1a6c" stroke="#4d1a6c" stroke-width="0.13" textLength="42.20" lengthAdjust="spacingAndGlyphs" >$PORTC.4</text>
<rect x="869.2" y="450.00" width="16.4" height="15.8" fill="#efefef" stroke="#e0e0e0" stroke-width="0.8"/>
<path d="M875.5 457.20H879.5L877.5 459.40Z" fill="#555"/>
<polygon points="413.20,480.66 417.70,472.06 428.20,472.06 423.70,480.66" fill="#480c64"/>
<text x="433.40" y="480.21" font-size="9.3" fill="#8e8e8e" stroke="#8e8e8e" stroke-width="0.13" textLength="15.10" lengthAdjust="spacingAndGlyphs" >CLK</text>
<text x="520.80" y="480.21" font-size="9.3" fill="#8e8e8e" stroke="#8e8e8e" stroke-width="0.13" textLength="42.20" lengthAdjust="spacingAndGlyphs" >$PORTG.6</text>
<g transform="translate(414.20,487.32)">
<rect x="0.5" y="0.5" width="11.2" height="13.8" rx="1.3" fill="#fff" stroke="#8350a2" stroke-width="1"/>
<rect x="1" y="0.8" width="10.2" height="1.3" fill="#8a4aaa"/>
<rect x="1" y="2.2" width="10.2" height="2.1" fill="#6a92c8"/>
<path d="M2 5.6H9.2" stroke="#e6c8f0" stroke-width="1.1"/>
<path d="M2 7.4H10.4" stroke="#a368c2" stroke-width="1.15"/>
<path d="M2 9.1H8.6" stroke="#e6c8f0" stroke-width="1.1"/>
<path d="M2 10.7H9.4" stroke="#a368c2" stroke-width="1.15"/>
<path d="M2 12.4H9.8" stroke="#e6c8f0" stroke-width="1.1"/>
</g>
<text x="433.40" y="498.17" font-size="9.3" fill="#4d1a6c" stroke="#4d1a6c" stroke-width="0.13" textLength="60.00" lengthAdjust="spacingAndGlyphs" >CLK Remap Pin</text>
<text x="520.80" y="498.17" font-size="9.3" fill="#4d1a6c" stroke="#4d1a6c" stroke-width="0.13" textLength="42.20" lengthAdjust="spacingAndGlyphs" >$PORTG.6</text>
<rect x="869.2" y="485.92" width="16.4" height="15.8" fill="#efefef" stroke="#e0e0e0" stroke-width="0.8"/>
<path d="M875.5 493.12H879.5L877.5 495.32Z" fill="#555"/>
<polygon points="413.20,516.58 417.70,507.98 428.20,507.98 423.70,516.58" fill="#480c64"/>
<text x="433.40" y="516.13" font-size="9.3" fill="#4d1a6c" stroke="#4d1a6c" stroke-width="0.13" textLength="30.30" lengthAdjust="spacingAndGlyphs" >CS / SS</text>
<text x="520.80" y="516.13" font-size="9.3" fill="#4d1a6c" stroke="#4d1a6c" stroke-width="0.13" textLength="42.20" lengthAdjust="spacingAndGlyphs" >$PORTA.0</text>
<g transform="translate(420.00,529.72)">
<circle r="6.2" fill="#fff" stroke="#9660b2" stroke-width="1.8"/>
<path d="M-6.3 0H6.3M0 -6.3V6.3" stroke="#4c1268" stroke-width="1.7"/>
</g>
<text x="433.40" y="534.09" font-size="9.3" fill="#4d1a6c" stroke="#4d1a6c" stroke-width="0.13" textLength="32.50" lengthAdjust="spacingAndGlyphs" >Use IRQ</text>
<text x="520.80" y="534.09" font-size="9.3" fill="#4d1a6c" stroke="#4d1a6c" stroke-width="0.13" textLength="10.80" lengthAdjust="spacingAndGlyphs" >No</text>
<rect x="869.2" y="521.84" width="16.4" height="15.8" fill="#efefef" stroke="#e0e0e0" stroke-width="0.8"/>
<path d="M875.5 529.04H879.5L877.5 531.24Z" fill="#555"/>
<rect x="377.20" y="545.38" width="6.4" height="6.2" rx="0.8" fill="#fff" stroke="#8c8c8c" stroke-width="0.9"/>
<path d="M378.70 548.48H382.10" stroke="#2f5fb0" stroke-width="1.1"/>
<g transform="translate(392.80,541.10)">
<rect x="0.4" y="0.4" width="14.2" height="13.2" rx="0.8" fill="url(#fold)" stroke="#8448a6" stroke-width="0.9"/>
<rect x="0.9" y="0.9" width="13.2" height="2.2" fill="#9a5cba"/>
<path d="M2.0 12.4L9.6 4.8" stroke="#8c8c86" stroke-width="2.9" stroke-linecap="round"/>
<circle cx="10.7" cy="3.9" r="3.3" fill="#8c8c86"/>
<path d="M2.0 12.4L9.6 4.8" stroke="#dcdcd6" stroke-width="1.7" stroke-linecap="round"/>
<circle cx="10.7" cy="3.9" r="2.6" fill="#d4d4ce"/>
<path d="M11.2 3.4L15 -0.4" stroke="#a266c0" stroke-width="2.1"/>
<circle cx="11.2" cy="3.4" r="1.05" fill="#a266c0"/>
</g>
<text x="413.20" y="552.05" font-size="9.3" fill="#4d1a6c" stroke="#4d1a6c" stroke-width="0.13" textLength="40.40" lengthAdjust="spacingAndGlyphs" >Simulation</text>
<g transform="translate(420.00,565.64)">
<circle r="6.2" fill="#fff" stroke="#9660b2" stroke-width="1.8"/>
<path d="M-6.3 0H6.3M0 -6.3V6.3" stroke="#4c1268" stroke-width="1.7"/>
</g>
<text x="433.40" y="570.01" font-size="9.3" fill="#4d1a6c" stroke="#4d1a6c" stroke-width="0.13" textLength="66.50" lengthAdjust="spacingAndGlyphs" >Simulate Comms</text>
<text x="520.80" y="570.01" font-size="9.3" fill="#4d1a6c" stroke="#4d1a6c" stroke-width="0.13" textLength="15.70" lengthAdjust="spacingAndGlyphs" >Yes</text>
<rect x="869.2" y="557.76" width="16.4" height="15.8" fill="#efefef" stroke="#e0e0e0" stroke-width="0.8"/>
<path d="M875.5 564.96H879.5L877.5 567.16Z" fill="#555"/>
<rect x="397.30" y="581.30" width="6.4" height="6.2" rx="0.8" fill="#fff" stroke="#8c8c8c" stroke-width="0.9"/>
<path d="M398.80 584.40H402.20" stroke="#2f5fb0" stroke-width="1.1"/>
<g transform="translate(412.90,577.02)">
<rect x="0.4" y="0.4" width="14.2" height="13.2" rx="0.8" fill="url(#fold)" stroke="#8448a6" stroke-width="0.9"/>
<rect x="0.9" y="0.9" width="13.2" height="2.2" fill="#9a5cba"/>
<path d="M2.0 12.4L9.6 4.8" stroke="#8c8c86" stroke-width="2.9" stroke-linecap="round"/>
<circle cx="10.7" cy="3.9" r="3.3" fill="#8c8c86"/>
<path d="M2.0 12.4L9.6 4.8" stroke="#dcdcd6" stroke-width="1.7" stroke-linecap="round"/>
<circle cx="10.7" cy="3.9" r="2.6" fill="#d4d4ce"/>
<path d="M11.2 3.4L15 -0.4" stroke="#a266c0" stroke-width="2.1"/>
<circle cx="11.2" cy="3.4" r="1.05" fill="#a266c0"/>
</g>
<text x="433.20" y="587.97" font-size="9.3" fill="#4d1a6c" stroke="#4d1a6c" stroke-width="0.13" textLength="66.00" lengthAdjust="spacingAndGlyphs" >Communications</text>
<g transform="translate(439.80,601.56)">
<circle r="6.2" fill="#fff" stroke="#9660b2" stroke-width="1.8"/>
<path d="M-6.3 0H6.3M0 -6.3V6.3" stroke="#4c1268" stroke-width="1.7"/>
</g>
<text x="453.60" y="605.93" font-size="9.3" fill="#4d1a6c" stroke="#4d1a6c" stroke-width="0.13" textLength="55.40" lengthAdjust="spacingAndGlyphs" >Scope Traces</text>
<text x="520.80" y="605.93" font-size="9.3" fill="#4d1a6c" stroke="#4d1a6c" stroke-width="0.13" textLength="15.70" lengthAdjust="spacingAndGlyphs" >Yes</text>
<rect x="869.2" y="593.68" width="16.4" height="15.8" fill="#efefef" stroke="#e0e0e0" stroke-width="0.8"/>
<path d="M875.5 600.88H879.5L877.5 603.08Z" fill="#555"/>
<g transform="translate(439.80,619.52)">
<circle r="6.2" fill="#fff" stroke="#9660b2" stroke-width="1.8"/>
<path d="M-6.3 0H6.3M0 -6.3V6.3" stroke="#4c1268" stroke-width="1.7"/>
</g>
<text x="453.60" y="623.89" font-size="9.3" fill="#4d1a6c" stroke="#4d1a6c" stroke-width="0.13" textLength="52.40" lengthAdjust="spacingAndGlyphs" >Console Data</text>
<text x="520.80" y="623.89" font-size="9.3" fill="#4d1a6c" stroke="#4d1a6c" stroke-width="0.13" textLength="10.80" lengthAdjust="spacingAndGlyphs" >No</text>
<rect x="869.2" y="611.64" width="16.4" height="15.8" fill="#efefef" stroke="#e0e0e0" stroke-width="0.8"/>
<path d="M875.5 618.84H879.5L877.5 621.04Z" fill="#555"/>
<g transform="translate(434.00,631.00)">
<rect x="0.5" y="0.5" width="11.2" height="13.8" rx="1.3" fill="#fff" stroke="#8350a2" stroke-width="1"/>
<rect x="1" y="0.8" width="10.2" height="1.3" fill="#8a4aaa"/>
<rect x="1" y="2.2" width="10.2" height="2.1" fill="#6a92c8"/>
<path d="M2 5.6H9.2" stroke="#e6c8f0" stroke-width="1.1"/>
<path d="M2 7.4H10.4" stroke="#a368c2" stroke-width="1.15"/>
<path d="M2 9.1H8.6" stroke="#e6c8f0" stroke-width="1.1"/>
<path d="M2 10.7H9.4" stroke="#a368c2" stroke-width="1.15"/>
<path d="M2 12.4H9.8" stroke="#e6c8f0" stroke-width="1.1"/>
</g>
<text x="453.60" y="641.85" font-size="9.3" fill="#4d1a6c" stroke="#4d1a6c" stroke-width="0.13" textLength="14.20" lengthAdjust="spacingAndGlyphs" >API</text>
<rect x="869.2" y="629.60" width="16.4" height="15.8" fill="#efefef" stroke="#e0e0e0" stroke-width="0.8"/>
<path d="M875.5 636.80H879.5L877.5 639.00Z" fill="#555"/>
<rect x="368.6" y="670.2" width="519.9" height="38" fill="#fff" stroke="#8a8a8a" stroke-width="1"/>
<text x="371.40" y="679.90" font-size="8.7" fill="#5a2470" textLength="104.40" lengthAdjust="spacingAndGlyphs" style='font-family:"Liberation Mono", monospace' xml:space="preserve">Name       "Component"</text>
<text x="371.40" y="690.90" font-size="8.7" fill="#5a2470" textLength="114.80" lengthAdjust="spacingAndGlyphs" style='font-family:"Liberation Mono", monospace' xml:space="preserve">Component ADC_MCP356X1</text>
</svg></body></html>
